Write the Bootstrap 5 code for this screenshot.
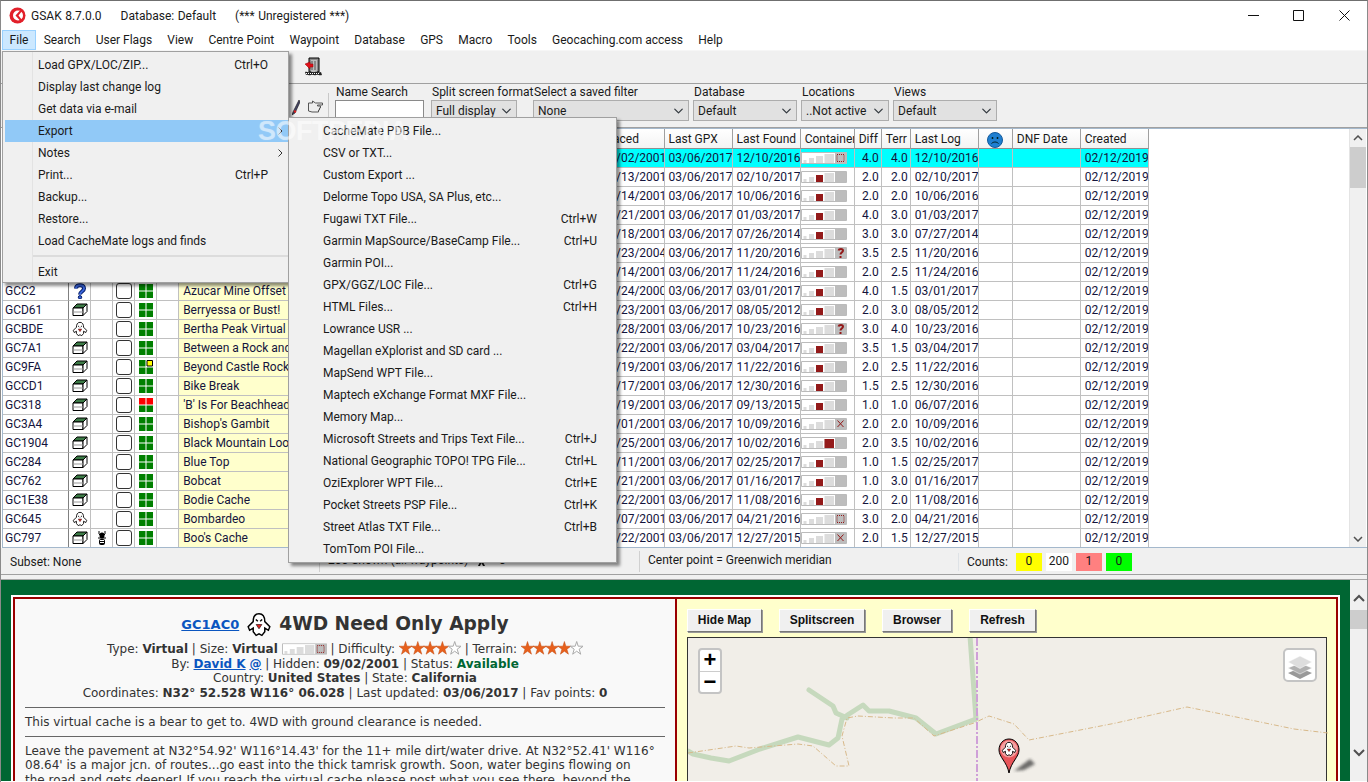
<!DOCTYPE html>
<html lang="en"><head><meta charset="utf-8"><title>GSAK</title>
<link href="https://cdn.jsdelivr.net/npm/bootstrap@5.3.0/dist/css/bootstrap.min.css" rel="stylesheet">
<style>
html,body{height:782px;overflow:hidden;background:#fff}
body{font:12px/16px Roboto,"Liberation Sans",sans-serif;color:#1a1a1a}
.win{position:relative;width:1368px;height:782px;overflow:hidden;border-top:1px solid #6f6f6f;border-left:1px solid #8a8a8a;border-right:1px solid #8a8a8a}
.tbar{height:29px;padding-left:8px;gap:5px;word-spacing:.5px}
.tbar .gap{margin-left:14px}
.wc{width:45.5px;text-align:center}
.wc svg{display:block;margin:0 auto}
.mbar{height:20px;padding-left:1px}
.mbar span{padding:1px 6.6px 0;border:1px solid transparent;line-height:16px;white-space:nowrap}
.mbar .on{background:#cce8ff;border-color:#99d1ff}
.tool{height:34px;background:#f0f0f0;border-top:1px solid #f6f6f6;border-bottom:1px solid #a0a0a0;padding-left:303px}
.filt{height:44px;background:#f0f0f0;border-bottom:1px solid #a0a0a0}
.lead{width:328px;margin-top:9px;padding:6px 4px 0 0;border-right:1px solid #c8c8c8;justify-content:flex-end;gap:7px}
.fld{margin-left:6px;padding-top:0;margin-top:1px}
.fld label{display:block;margin:0 0 1px 1px;line-height:14px;white-space:nowrap}
.fld .form-control,.fld .form-select{height:21px;min-height:0;padding:0 14px 0 4px;font-size:12px;line-height:18px;border-radius:0;color:#1a1a1a;box-shadow:none}
.fld .form-control{background:#fff;border:1px solid #8a8a8a}
.fld .form-select{background-color:#e1e1e1;border:1px solid #adadad;background-position:right 3px center;background-size:13px 10px}
.w1{width:89px}.w2{width:86px;margin-left:7px}.w3{width:156px;margin-left:16px}.w4{width:104px;margin-left:4px}.w5{width:88px;margin-left:4px}.w6{width:104px;margin-left:4px}
.gridw{height:420px;border:1px solid #a4b8cc;border-right:0;margin-left:1px;background:#fff}
.gridb{width:1346px;overflow:hidden}
.gt.table{width:1146px;table-layout:fixed;margin:0;border-collapse:separate;border-spacing:0;font-size:12px;line-height:18px;color:#14143c}
.gt.table>:not(caption)>*>*{padding:0 0 0 4px;height:19px;border:0;border-right:1px solid #c0c0c0;border-bottom:1px solid #c0c0c0;overflow:hidden;white-space:nowrap;box-shadow:none}
.gt.table>thead>tr>th{font-weight:400;height:20px;padding-top:1px;background:linear-gradient(#fff,#f3f3f3);border-right-color:#a0a0a0;border-bottom:1px solid #8f8f8f;color:#1a1a1a}
.gt.table>tbody>tr>td:first-child{border-right-color:#808080;padding-left:2px}
.gt.table>tbody>tr>td.n{--bs-table-bg:#ffc}
.gt.table>tbody>tr.cy>*{--bs-table-bg:#0ff}
.gt.table>tbody>tr>td.r{text-align:right;padding:0 2px 0 0}
.gt.table>tbody>tr>td.i{padding:0;text-align:center}
.gt svg{display:block}
.ti{width:18px;height:16px;margin:1px auto 0}
.cb{display:block;width:16px;height:16px;border:1px solid #333;border-radius:3px;background:#fff;margin:1px auto 0}
.st{width:16px;height:16px;margin:1px auto 0}
.cs{width:46px;height:12px;margin-top:3px}
.sad{width:16px;height:16px;margin:-1px auto 0}
.vbar{width:17px;background:#f0f0f0;border-left:1px solid #e4e4e4;align-items:center}
.vbar .th{background:#cdcdcd;align-self:stretch}
.sb1{height:17px}.th1{height:41px;margin-top:1px}
.stat{height:27px;background:#f0f0f0;border-bottom:1px solid #a0a0a0}
.stat>div{height:21px;line-height:18px;padding-left:8px;margin-top:3px;border-left:1px solid #d0d0d0;white-space:nowrap}
.stat>div:first-child{border:0;width:318px;padding-left:9px;margin-top:5px}
.s2{width:320px}.s3{width:319px}
.cnt{width:26px;height:18px;text-align:center;margin-right:4px;line-height:16px}
.sep{height:5px;border-bottom:1px solid #a8a8a8;background:#f0f0f0}
.web{height:201px;overflow:hidden;background:#f0f0f0}
.gr{width:1349px;background:#063;padding:15px 10px 0 10px}
.fw{border:2px solid #fff;border-bottom:0;height:200px}
.fr{border:2px solid #900;border-bottom:0;height:200px}
.lp{width:660px;flex:none;background:#f9f9f9;color:#333;font:12px/14.7px "DejaVu Sans",sans-serif;padding:11px 10px 0 10px;border-right:2px solid #900;width:662px;text-align:center;overflow:hidden}
.lp a{color:#0b56c0;font-weight:700}
.lp hr{margin:6px 0 7px;border:0;border-top:1px solid #666;opacity:1}
.lp .tl{height:28px;gap:7px;margin-bottom:3px}
.lp .tl a{font-size:13px;margin-top:3px}
.lp h1{font:700 18.6px/26px "DejaVu Sans",sans-serif;margin:0;color:#333}
.lp p{margin:0;text-align:left}
.gh{width:26px;height:27px}
.stars{width:62px;height:15px;vertical-align:-3px}
.sz{width:45px;height:12px;vertical-align:-2px}
.rp{flex:1;background:#ffc;padding:10px 9px 0 10px;overflow:hidden}
.bts{gap:17px;margin-bottom:5px}
.bts .btn{height:23px;padding:0;font:700 12px/21px "Liberation Sans",sans-serif;color:#111;background:#f0f0f0;border:1px solid;border-color:#fff #777 #777 #fff;border-radius:0;box-shadow:1px 1px 0 #999}
.map{position:relative;height:160px;width:640px;background:#f1eee8;border:1px solid #333}
.map>svg{position:absolute;left:0;top:0}
.zm{position:absolute;left:10px;top:10px;width:24px;height:46px;background:#fff;border:2px solid #c4c4c4;border-radius:4px;font:700 22px/20px "Liberation Sans",sans-serif;text-align:center;color:#000}
.zm div{height:21px}.zm div+div{border-top:1px solid #ccc}
.ly{position:absolute;left:595px;top:10px;width:34px;height:34px;background:#fff;border:2px solid #c4c4c4;border-radius:5px}
.ly svg{display:block;margin:3px auto}
.arr{margin:14px 0 0}
.menu.dropdown-menu{position:absolute;margin:0;padding:2px 0 0;min-width:0;background:#f0f0f0;border:1px solid #a0a0a0;border-radius:0;box-shadow:3px 3px 3px rgba(0,0,0,.45);font-size:12px;color:#1a1a1a;z-index:5}
.m1{left:1px;top:50px;width:287px;height:232px;padding-left:2px!important;background:linear-gradient(90deg,#f0f0f0 29px,#e3e3e3 29px,#e3e3e3 30px,#f0f0f0 30px)!important}
.m2{left:287px;top:116px;width:329px;height:446px;padding-top:2px!important}
.menu .dropdown-item{height:22px;padding:0 20px 0 33px;line-height:22px;color:#1a1a1a;display:flex;justify-content:space-between;white-space:nowrap;position:relative;font-size:12px}
.m2 .dropdown-item{padding:0 19px 0 34px}
.menu .dropdown-item.active{background:#91c9f7;color:#1a1a1a}
.menu .dropdown-divider{margin:3px 0 4px 28px;border-top:2px solid #dcdcdc;opacity:1}
.menu .ch{position:absolute;right:5px;top:7px}
.wm{position:absolute;left:257px;top:116px;z-index:6;font:700 27px/28px "Liberation Sans",sans-serif;letter-spacing:-.5px;color:rgba(255,255,255,.42);text-shadow:0 0 1px rgba(255,255,255,.3);pointer-events:none}
</style></head><body>
<svg width="0" height="0" class="position-absolute"><defs>
<symbol id="box" viewBox="0 0 18 16"><path d="M2 6 6 2h10l-4 4z" fill="#3c7a46" stroke="#000"/><path d="M2 6h10v7.500H2z" fill="#fff" stroke="#000"/><path d="M12 6l4-4v7.500l-4 4z" fill="#fff" stroke="#000"/><path d="M2 10h10" stroke="#999"/></symbol>
<symbol id="gh" viewBox="0 0 18 18"><path d="M9 1.500C6 1.500 5 4 5 7L1.500 10.500l1 2.500L5 11.500V14l2 2.500 2-1 2 1 2-2.500v-2.500l2.500 1.500 1-2.500L13 7C13 4 12 1.500 9 1.500z" fill="#fff" stroke="#000"/><path d="M6.800 5.500l1.400 1.300M11.200 5.500 9.800 6.800" stroke="#000"/><path d="M7 9h4l-2 3z" fill="#d22" stroke="#000" stroke-width=".4"/></symbol>
<symbol id="qq" viewBox="0 0 18 16"><path d="M5 5.500C5 1 13 1 13 5.500 13 8.500 9 8.500 9 11.500" fill="none" stroke="#001a66" stroke-width="4"/><path d="M5 5.500C5 1 13 1 13 5.500 13 8.500 9 8.500 9 11.500" fill="none" stroke="#3a64d8" stroke-width="2"/><circle cx="9" cy="14.300" r="1.700" fill="#3a64d8" stroke="#001a66"/></symbol>
<symbol id="bug" viewBox="0 0 18 16"><ellipse cx="9" cy="5.500" rx="2.500" ry="3" fill="#000"/><rect x="6" y="9" width="6" height="6" rx="2" fill="#000"/><path d="M7 10.500h4M7 12.500h4" stroke="#fff"/><path d="M6 1v3l1 1M12 1v3l-1 1M5 8h8" stroke="#000" fill="none"/></symbol>
<symbol id="g4" viewBox="0 0 16 16"><path d="M1 1h6.500v6.500H1zM8.500 1H15v6.500H8.500zM1 8.500h6.500V15H1zM8.500 8.500H15V15H8.500z" fill="#008000"/></symbol>
<symbol id="gy" viewBox="0 0 16 16"><path d="M1 1h6.500v6.500H1zM1 8.500h6.500V15H1zM8.500 8.500H15V15H8.500z" fill="#008000"/><path d="M9 1.500h5.500v5.500H9z" fill="#ff0" stroke="#000"/></symbol>
<symbol id="gr" viewBox="0 0 16 16"><path d="M1 8.500h6.500V15H1zM8.500 8.500H15V15H8.500z" fill="#008000"/><path d="M1 1h6.500v6.500H1zM8.500 1H15v6.500H8.500z" fill="#f00"/></symbol>
<symbol id="base" viewBox="0 0 46 12"><path d="M.5.500h45v11H.5z" fill="#fff" stroke="#bbb"/><path d="M2.500 8h3v3h-3zM8 6h5v5H8zM15 4h7v7h-7zM23.500 2H33v9h-9.500z" fill="#dcdcdc"/><path d="M34 1h11v10H34z" fill="#bdbdbd"/></symbol>
<symbol id="cs" viewBox="0 0 46 12"><use href="#base"/><path d="M15 4h7v7h-7z" fill="#931a1a"/></symbol>
<symbol id="cr" viewBox="0 0 46 12"><use href="#base"/><path d="M23.500 2H33v9h-9.500z" fill="#931a1a"/></symbol>
<symbol id="cv" viewBox="0 0 46 12"><use href="#base"/><path d="M36 2.500h7v7h-7z" fill="none" stroke="#931a1a" stroke-dasharray="1 1"/></symbol>
<symbol id="cx" viewBox="0 0 46 12"><use href="#base"/><path d="M36.500 2.500l6 6.500m0-6.500-6 6.500" stroke="#931a1a" fill="none"/></symbol>
<symbol id="cq" viewBox="0 0 46 12"><use href="#base"/><path d="M37.500 3.500C38 1.500 42 1.500 42 3.500 42 5.500 39.500 5.500 39.500 7.500" fill="none" stroke="#931a1a" stroke-width="2"/><path d="M38.500 9h2v2h-2z" fill="#931a1a"/></symbol>
<symbol id="st4" viewBox="0 0 62 15"><g fill="#e8601c" stroke="#c14a10" stroke-width=".5"><path id="s1" d="M6.500.500 8 5.200h5L9 8.200l1.500 5L6.500 10.200l-4 3L4 8.200 0 5.200h5z"/><use href="#s1" x="12.300"/><use href="#s1" x="24.600"/><use href="#s1" x="36.900"/></g><use href="#s1" x="49.200" fill="#fff" stroke="#aaa"/></symbol>
<symbol id="sd" viewBox="0 0 12 12"><path d="M2 2l4 4m4-4L6 6M2 10l4-4m4 4L6 6"/></symbol>
</defs></svg>
<div class="win d-flex flex-column">
<header class="tbar d-flex align-items-center">
<svg width="17" height="17" viewBox="0 0 17 17"><circle cx="8.500" cy="8.500" r="8" fill="#e2202a"/><circle cx="9" cy="8.500" r="5" fill="#fff"/><path d="M10.500 4 6.500 8.500l4 4.500h2.500L9.500 8.500 13 4z" fill="#e2202a"/></svg>
<span>GSAK 8.7.0.0</span><span class="gap">Database: Default</span><span class="gap">(*** Unregistered ***)</span>
<div class="ms-auto d-flex"><div class="wc"><svg width="11" height="11"><path d="M0 5.500h11" stroke="#111"/></svg></div><div class="wc"><svg width="11" height="11"><path d="M.5.500h10v10H.5z" fill="none" stroke="#111"/></svg></div><div class="wc"><svg width="11" height="11"><path d="M.5.500l10 10m0-10-10 10" stroke="#111"/></svg></div></div>
</header>
<nav class="mbar d-flex"><span class="on">File</span><span>Search</span><span>User Flags</span><span>View</span><span>Centre Point</span><span>Waypoint</span><span>Database</span><span>GPS</span><span>Macro</span><span>Tools</span><span>Geocaching.com access</span><span>Help</span></nav>
<div class="tool d-flex align-items-center"><svg width="19" height="20" viewBox="0 0 19 20"><path d="M5 1h10v14H5z" fill="#8a8a8a" stroke="#000"/><path d="M7 3h6v12H7z" fill="#bcbcbc"/><path d="M8 4v9M11 4v9" stroke="#555"/><path d="M1 7l5-2v2h3v3H6v2z" fill="#e0101a" stroke="#900" stroke-width=".5"/><path d="M1 15c2-1 3 1 5 0s3 1 5 0 3 1 6 0l1 3c-3 1-4-1-6 0s-3-1-5 0-4-1-5 0z" fill="#222"/><path d="M2 16.500h14" stroke="#fff" stroke-dasharray="1 1"/></svg></div>
<div class="filt d-flex">
<div class="lead d-flex"><svg width="8" height="16" viewBox="0 0 8 16"><path d="M7 1 1 13l-1 3 3-2L8 3z" fill="#446" stroke="#111" stroke-width=".6"/><path d="M2 12l2 1" stroke="#d22" stroke-width="2"/></svg><svg width="17" height="15" viewBox="0 0 17 15"><path d="M1.500 4h4V2l3 2h7v2h-5v1h3v2h-1v2h-1v2H5l-3.500-1z" fill="#eee" stroke="#555"/></svg></div>
<div class="fld w1"><label>Name Search</label><input class="form-control" value="" aria-label="Name Search"></div>
<div class="fld w2"><label>Split screen format</label><select class="form-select" aria-label="Split"><option>Full display</option></select></div>
<div class="fld w3"><label>Select a saved filter</label><select class="form-select" aria-label="Filter"><option>None</option></select></div>
<div class="fld w4"><label>Database</label><select class="form-select" aria-label="Database"><option>Default</option></select></div>
<div class="fld w5"><label>Locations</label><select class="form-select" aria-label="Locations"><option>..Not active</option></select></div>
<div class="fld w6"><label>Views</label><select class="form-select" aria-label="Views"><option>Default</option></select></div>
</div>
<div class="gridw d-flex">
<div class="gridb"><table class="table gt"><colgroup><col style="width:66px"><col style="width:22px"><col style="width:22px"><col style="width:22px"><col style="width:22px"><col style="width:22px"><col style="width:419px"><col style="width:66px"><col style="width:68px"><col style="width:68px"><col style="width:54px"><col style="width:27px"><col style="width:29px"><col style="width:68px"><col style="width:34px"><col style="width:68px"><col style="width:68px"></colgroup>
<thead><tr><th>Code<th><th><th><th><th><th>Name<th>Placed<th>Last GPX<th>Last Found<th>Container<th>Diff<th>Terr<th>Last Log<th class="p-0"><svg class="sad" viewBox="0 0 16 16"><circle cx="8" cy="8" r="7.500" fill="#1f7fd0" stroke="#135a9c"/><path d="M5.500 5v2M10.500 5v2" stroke="#022" stroke-width="1.500"/><path d="M4.500 11.500c2-2 5-2 7 0" fill="none" stroke="#022"/></svg><th>DNF Date<th>Created</thead>
<tbody>
<tr class="cy"><td><td><td><td><td><td><td class="n"><td>09/02/2001<td>03/06/2017<td>12/10/2016<td class="i"><svg class="cs"><use href="#cv"/></svg><td class="r">4.0<td class="r">4.0<td>12/10/2016<td><td><td>02/12/2019
<tr><td><td><td><td><td><td><td class="n"><td>04/13/2001<td>03/06/2017<td>02/10/2017<td class="i"><svg class="cs"><use href="#cs"/></svg><td class="r">2.0<td class="r">2.0<td>02/10/2017<td><td><td>02/12/2019
<tr><td><td><td><td><td><td><td class="n"><td>07/14/2001<td>03/06/2017<td>10/06/2016<td class="i"><svg class="cs"><use href="#cs"/></svg><td class="r">2.0<td class="r">2.0<td>10/06/2016<td><td><td>02/12/2019
<tr><td><td><td><td><td><td><td class="n"><td>06/21/2001<td>03/06/2017<td>01/03/2017<td class="i"><svg class="cs"><use href="#cs"/></svg><td class="r">4.0<td class="r">3.0<td>01/03/2017<td><td><td>02/12/2019
<tr><td><td><td><td><td><td><td class="n"><td>08/18/2001<td>03/06/2017<td>07/26/2014<td class="i"><svg class="cs"><use href="#cs"/></svg><td class="r">3.0<td class="r">3.0<td>07/27/2014<td><td><td>02/12/2019
<tr><td><td><td><td><td><td><td class="n"><td>03/23/2004<td>03/06/2017<td>11/20/2016<td class="i"><svg class="cs"><use href="#cq"/></svg><td class="r">3.5<td class="r">2.5<td>11/20/2016<td><td><td>02/12/2019
<tr><td><td><td><td><td><td><td class="n"><td>05/14/2001<td>03/06/2017<td>11/24/2016<td class="i"><svg class="cs"><use href="#cs"/></svg><td class="r">2.0<td class="r">2.5<td>11/24/2016<td><td><td>02/12/2019
<tr><td>GCC2<td class="i"><svg class="ti"><use href="#qq"/></svg><td><td class="i"><i class="cb"></i><td class="i"><svg class="st"><use href="#g4"/></svg><td><td class="n">Azucar Mine Offset<td>09/24/2000<td>03/06/2017<td>03/01/2017<td class="i"><svg class="cs"><use href="#cs"/></svg><td class="r">4.0<td class="r">1.5<td>03/01/2017<td><td><td>02/12/2019
<tr><td>GCD61<td class="i"><svg class="ti"><use href="#box"/></svg><td><td class="i"><i class="cb"></i><td class="i"><svg class="st"><use href="#g4"/></svg><td><td class="n">Berryessa or Bust!<td>05/23/2001<td>03/06/2017<td>08/05/2012<td class="i"><svg class="cs"><use href="#cs"/></svg><td class="r">2.0<td class="r">3.0<td>08/05/2012<td><td><td>02/12/2019
<tr><td>GCBDE<td class="i"><svg class="ti"><use href="#gh"/></svg><td><td class="i"><i class="cb"></i><td class="i"><svg class="st"><use href="#g4"/></svg><td><td class="n">Bertha Peak Virtual Cache<td>06/28/2001<td>03/06/2017<td>10/23/2016<td class="i"><svg class="cs"><use href="#cq"/></svg><td class="r">3.0<td class="r">4.0<td>10/23/2016<td><td><td>02/12/2019
<tr><td>GC7A1<td class="i"><svg class="ti"><use href="#box"/></svg><td><td class="i"><i class="cb"></i><td class="i"><svg class="st"><use href="#g4"/></svg><td><td class="n">Between a Rock and a Hard Place<td>07/22/2001<td>03/06/2017<td>03/04/2017<td class="i"><svg class="cs"><use href="#cs"/></svg><td class="r">3.5<td class="r">1.5<td>03/04/2017<td><td><td>02/12/2019
<tr><td>GC9FA<td class="i"><svg class="ti"><use href="#box"/></svg><td><td class="i"><i class="cb"></i><td class="i"><svg class="st"><use href="#gy"/></svg><td><td class="n">Beyond Castle Rock<td>08/19/2001<td>03/06/2017<td>11/22/2016<td class="i"><svg class="cs"><use href="#cs"/></svg><td class="r">2.0<td class="r">2.5<td>11/22/2016<td><td><td>02/12/2019
<tr><td>GCCD1<td class="i"><svg class="ti"><use href="#box"/></svg><td><td class="i"><i class="cb"></i><td class="i"><svg class="st"><use href="#g4"/></svg><td><td class="n">Bike Break<td>04/17/2001<td>03/06/2017<td>12/30/2016<td class="i"><svg class="cs"><use href="#cs"/></svg><td class="r">1.5<td class="r">2.5<td>12/30/2016<td><td><td>02/12/2019
<tr><td>GC318<td class="i"><svg class="ti"><use href="#box"/></svg><td><td class="i"><i class="cb"></i><td class="i"><svg class="st"><use href="#gr"/></svg><td><td class="n">'B' Is For Beachhead<td>02/19/2001<td>03/06/2017<td>09/13/2015<td class="i"><svg class="cs"><use href="#cs"/></svg><td class="r">1.0<td class="r">1.0<td>06/07/2016<td><td><td>02/12/2019
<tr><td>GC3A4<td class="i"><svg class="ti"><use href="#box"/></svg><td><td class="i"><i class="cb"></i><td class="i"><svg class="st"><use href="#g4"/></svg><td><td class="n">Bishop's Gambit<td>03/01/2001<td>03/06/2017<td>10/09/2016<td class="i"><svg class="cs"><use href="#cx"/></svg><td class="r">2.0<td class="r">2.0<td>10/09/2016<td><td><td>02/12/2019
<tr><td>GC1904<td class="i"><svg class="ti"><use href="#box"/></svg><td><td class="i"><i class="cb"></i><td class="i"><svg class="st"><use href="#g4"/></svg><td><td class="n">Black Mountain Lookout<td>09/25/2001<td>03/06/2017<td>10/02/2016<td class="i"><svg class="cs"><use href="#cr"/></svg><td class="r">2.0<td class="r">3.5<td>10/02/2016<td><td><td>02/12/2019
<tr><td>GC284<td class="i"><svg class="ti"><use href="#box"/></svg><td><td class="i"><i class="cb"></i><td class="i"><svg class="st"><use href="#g4"/></svg><td><td class="n">Blue Top<td>03/11/2001<td>03/06/2017<td>02/25/2017<td class="i"><svg class="cs"><use href="#cs"/></svg><td class="r">1.0<td class="r">1.5<td>02/25/2017<td><td><td>02/12/2019
<tr><td>GC762<td class="i"><svg class="ti"><use href="#box"/></svg><td><td class="i"><i class="cb"></i><td class="i"><svg class="st"><use href="#g4"/></svg><td><td class="n">Bobcat<td>04/21/2001<td>03/06/2017<td>01/16/2017<td class="i"><svg class="cs"><use href="#cs"/></svg><td class="r">1.0<td class="r">3.0<td>01/16/2017<td><td><td>02/12/2019
<tr><td>GC1E38<td class="i"><svg class="ti"><use href="#box"/></svg><td><td class="i"><i class="cb"></i><td class="i"><svg class="st"><use href="#g4"/></svg><td><td class="n">Bodie Cache<td>10/22/2001<td>03/06/2017<td>11/08/2016<td class="i"><svg class="cs"><use href="#cs"/></svg><td class="r">2.0<td class="r">2.0<td>11/08/2016<td><td><td>02/12/2019
<tr><td>GC645<td class="i"><svg class="ti"><use href="#gh"/></svg><td><td class="i"><i class="cb"></i><td class="i"><svg class="st"><use href="#g4"/></svg><td><td class="n">Bombardeo<td>06/07/2001<td>03/06/2017<td>04/21/2016<td class="i"><svg class="cs"><use href="#cv"/></svg><td class="r">3.0<td class="r">2.0<td>04/21/2016<td><td><td>02/12/2019
<tr><td>GC797<td class="i"><svg class="ti"><use href="#box"/></svg><td class="i"><svg class="ti"><use href="#bug"/></svg><td class="i"><i class="cb"></i><td class="i"><svg class="st"><use href="#g4"/></svg><td><td class="n">Boo's Cache<td>07/22/2001<td>03/06/2017<td>12/27/2015<td class="i"><svg class="cs"><use href="#cx"/></svg><td class="r">2.0<td class="r">1.5<td>12/27/2015<td><td><td>02/12/2019
</tbody></table></div>
<div class="vbar d-flex flex-column"><div class="sb1 d-flex align-items-center"><svg width="10" height="6"><path d="M1 5l4-4 4 4" fill="none" stroke="#505050" stroke-width="1.500"/></svg></div><div class="th th1"></div><div class="flex-grow-1"></div><div class="sb1 d-flex align-items-center"><svg width="10" height="6"><path d="M1 1l4 4 4-4" fill="none" stroke="#505050" stroke-width="1.500"/></svg></div></div>
</div>
<div class="stat d-flex">
<div>Subset: None</div>
<div class="s2">200 Shown (all waypoints) &nbsp; <svg width="9" height="11" viewBox="0 0 9 11"><path d="M3 0h3v3l3 3-1 1-2-2v2l2 4H6L4.500 8 3 11H1l2-4V5L1 7 0 6l3-3z" fill="#111"/></svg> = 0</div>
<div class="s3">Center point = Greenwich meridian</div>
<div class="d-flex align-items-center flex-grow-1 border-0 ps-0"><span class="s4 d-flex align-items-center ps-2 border-start"><span class="me-2">Counts:</span></span><span class="cnt" style="background:#ff0">0</span><span class="cnt" style="background:#fff">200</span><span class="cnt" style="background:#ff8080">1</span><span class="cnt" style="background:#0f0">0</span></div>
</div>
<div class="sep"></div>
<div class="web d-flex">
<div class="gr"><div class="fw"><div class="fr d-flex">
<div class="lp">
<div class="tl d-flex justify-content-center align-items-center"><a href="#">GC1AC0</a><svg class="gh"><use href="#gh"/></svg><h1>4WD Need Only Apply</h1></div>
<div>Type: <b>Virtual</b> | Size: <b>Virtual</b> <svg class="sz"><use href="#cv"/></svg> | Difficulty: <svg class="stars"><use href="#st4"/></svg> | Terrain: <svg class="stars"><use href="#st4"/></svg></div>
<div>By: <a href="#">David K</a> <a href="#">@</a> | Hidden: <b>09/02/2001</b> | Status: <b class="text-success" style="color:#063!important">Available</b></div>
<div>Country: <b>United States</b> | State: <b>California</b></div>
<div>Coordinates: <b>N32° 52.528 W116° 06.028</b> | Last updated: <b>03/06/2017</b> | Fav points: <b>0</b></div>
<hr>
<p>This virtual cache is a bear to get to. 4WD with ground clearance is needed.</p>
<hr>
<p>Leave the pavement at N32°54.92' W116°14.43' for the 11+ mile dirt/water drive. At N32°52.41' W116°<br>08.64' is a major jcn. of routes...go east into the thick tamrisk growth. Soon, water begins flowing on<br>the road and gets deeper! If you reach the virtual cache please post what you see there, beyond the</p>
</div>
<div class="rp">
<div class="bts d-flex"><button class="btn" style="width:75px">Hide Map</button><button class="btn" style="width:86px">Splitscreen</button><button class="btn" style="width:70px">Browser</button><button class="btn" style="width:67px">Refresh</button></div>
<div class="map">
<svg width="640" height="160" viewBox="0 0 640 160"><defs><filter id="bl"><feGaussianBlur stdDeviation="1.500"/></filter></defs>
<g fill="none" stroke="#c6d9bd" stroke-width="5" stroke-linecap="round" stroke-linejoin="round"><path d="M282-2 288 81 248 96 228 80 201 73 181 73 175 67 161 76 154 81 150 100 141 107 110 99 72 111 41 123 23 120 5 116 0 113"/><path d="M121 52 145 68 148 75 159 80"/></g>
<g fill="none" stroke="#d8b98a" stroke-width="1" stroke-dasharray="5 2 1 2"><path d="M0 115 48 108 61 110 110 106 125 108 148 128 161 128 154 98 159 80 170 78 206 80 226 80 246 98 286 85 301 78 326 86 341 102 428 85 499 69 553 80 606 91 640 95"/></g>
<path d="M289 0V145" stroke="#cfa0d8" stroke-width="2" stroke-dasharray="8 2 2 2"/>
<path d="M326 133 342 121 347 126 336 132z" fill="#333" opacity=".7" filter="url(#bl)"/>
<path d="M321 101c-6 0-10 5-10 11 0 7 8 12 10 23 2-11 10-16 10-23 0-6-4-11-10-11z" fill="#e8555a" stroke="#000"/><circle cx="321" cy="111" r="8.500" fill="#f4a0a0"/><svg x="313" y="103" width="16" height="16"><use href="#gh"/></svg></svg>
<div class="zm"><div>+</div><div>−</div></div>
<div class="ly"><svg width="26" height="26" viewBox="0 0 26 26"><path d="M13 15 25 20 13 26 1 20z" fill="#999"/><path d="M13 10 25 15 13 21 1 15z" fill="#b0b0b0" stroke="#fff" stroke-width=".5"/><path d="M13 3 25 9 13 15.500 1 9z" fill="#ddd" stroke="#fff" stroke-width=".5"/></svg></div>
</div>
</div>
</div></div></div>
<div class="vbar d-flex flex-column flex-grow-1 border-0"><svg class="arr" width="12" height="8"><path d="M1 7l5-5 5 5" fill="none" stroke="#505050" stroke-width="2"/></svg><div class="th mt-2" style="height:19px"></div><svg class="mt-auto mb-4" width="12" height="8"><path d="M1 1l5 5 5-5" fill="none" stroke="#505050" stroke-width="2"/></svg></div>
</div>
<div class="dropdown-menu show menu m1">
<a class="dropdown-item">Load GPX/LOC/ZIP...<span>Ctrl+O</span></a>
<a class="dropdown-item">Display last change log</a>
<a class="dropdown-item">Get data via e-mail</a>
<a class="dropdown-item active">Export<svg class="ch" width="5" height="8"><path d="M.5.500l3.500 3.500-3.500 3.500" fill="none" stroke="#333"/></svg></a>
<a class="dropdown-item">Notes<svg class="ch" width="5" height="8"><path d="M.5.500l3.500 3.500-3.500 3.500" fill="none" stroke="#333"/></svg></a>
<a class="dropdown-item">Print...<span>Ctrl+P</span></a>
<a class="dropdown-item">Backup...</a>
<a class="dropdown-item">Restore...</a>
<a class="dropdown-item">Load CacheMate logs and finds</a>
<hr class="dropdown-divider">
<a class="dropdown-item">Exit</a>
</div>
<div class="dropdown-menu show menu m2">
<a class="dropdown-item">CacheMate PDB File...</a>
<a class="dropdown-item">CSV or TXT...</a>
<a class="dropdown-item">Custom Export ...</a>
<a class="dropdown-item">Delorme Topo USA, SA Plus, etc...</a>
<a class="dropdown-item">Fugawi TXT File...<span>Ctrl+W</span></a>
<a class="dropdown-item">Garmin MapSource/BaseCamp File...<span>Ctrl+U</span></a>
<a class="dropdown-item">Garmin POI...</a>
<a class="dropdown-item">GPX/GGZ/LOC File...<span>Ctrl+G</span></a>
<a class="dropdown-item">HTML Files...<span>Ctrl+H</span></a>
<a class="dropdown-item">Lowrance USR ...</a>
<a class="dropdown-item">Magellan eXplorist and SD card ...</a>
<a class="dropdown-item">MapSend WPT File...</a>
<a class="dropdown-item">Maptech eXchange Format MXF File...</a>
<a class="dropdown-item">Memory Map...</a>
<a class="dropdown-item">Microsoft Streets and Trips Text File...<span>Ctrl+J</span></a>
<a class="dropdown-item">National Geographic TOPO! TPG File...<span>Ctrl+L</span></a>
<a class="dropdown-item">OziExplorer WPT File...<span>Ctrl+E</span></a>
<a class="dropdown-item">Pocket Streets PSP File...<span>Ctrl+K</span></a>
<a class="dropdown-item">Street Atlas TXT File...<span>Ctrl+B</span></a>
<a class="dropdown-item">TomTom POI File...</a>
</div>
<div class="wm">SOFTPEDIA</div>
</div>
<script src="https://cdn.jsdelivr.net/npm/bootstrap@5.3.0/dist/js/bootstrap.bundle.min.js"></script>
</body></html>
